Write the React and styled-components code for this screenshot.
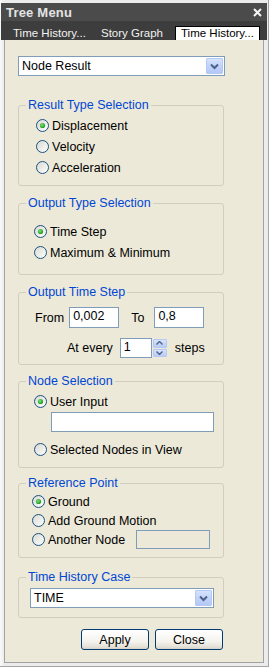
import React from 'react';
import styled, { createGlobalStyle } from 'styled-components';

const Global = createGlobalStyle`
  html, body { margin: 0; padding: 0; background: #efefef; }
  body { font-family: "Liberation Sans", Arial, sans-serif; }
  * { box-sizing: border-box; }
`;

const Window = styled.div`
  width: 269px;
  height: 667px;
  background: linear-gradient(90deg, #fafafa, #ececec 4px);
  padding-top: 3px;
  display: flex;
  flex-direction: column;
  box-shadow: inset -1px -1px 0 #a4a4a4;
  overflow: hidden;
`;

const TitleBar = styled.div`
  height: 18px;
  margin: 0 2px 0 1px;
  background: #4b4b4b;
  display: flex;
  align-items: center;
  justify-content: space-between;
  padding: 0 5px 0 5px;
  color: #e4e4e4;
  font: bold 13px "Liberation Sans", Arial, sans-serif;
  letter-spacing: 0.2px;
`;

const TabRow = styled.div`
  height: 19px;
  margin: 0 2px 0 1px;
  background: #3d3d3d;
  display: flex;
  align-items: flex-end;
  padding-left: 7px;
`;

const Tab = styled.div`
  width: ${p => p.$w}px;
  margin-right: ${p => p.$mr}px;
  height: 14px;
  padding-left: ${p => (p.$active ? 5 : 4)}px;
  font: 11.5px/13px "Liberation Sans", Arial, sans-serif;
  white-space: nowrap;
  overflow: hidden;
  color: ${p => (p.$active ? '#000' : '#f2f2f2')};
  background: ${p => (p.$active ? '#ffffff' : 'transparent')};
  border: 1px solid ${p => (p.$active ? '#000' : 'transparent')};
  border-bottom: none;
`;

const Body = styled.div`
  flex: 1;
  margin: 0 5px 4px 4px;
  background: #ece9d8;
  border: 1px solid #a2a2a2;
  border-top: none;
  display: flex;
  flex-direction: column;
  align-items: flex-start;
  padding: 16px 0 0 13px;
  font: 12.5px "Liberation Sans", Arial, sans-serif;
  color: #000;
`;

const Combo = styled.div`
  width: ${p => p.$w}px;
  height: 20px;
  margin-left: ${p => p.$ml || 0}px;
  background: #fff;
  border: 1px solid #7f9db9;
  display: flex;
  align-items: center;
  justify-content: space-between;
  padding: 0 1px 0 3px;
  font-size: 12.5px;
`;

const DropBtn = styled.div`
  width: 17px;
  height: 16px;
  border: 1px solid #b6c9f5;
  border-radius: 1px;
  background: linear-gradient(180deg, #d7e3fc 0%, #c1d3fb 50%, #b4c8f6 100%);
  display: flex;
  align-items: center;
  justify-content: center;
`;

const Group = styled.fieldset`
  width: 206px;
  margin: ${p => p.$mt}px 0 0 0;
  padding: ${p => p.$pt}px 0 ${p => p.$pb}px 0;
  border: 1px solid #d0cebf;
  border-radius: 3px;
  min-width: 0;
`;

const Legend = styled.legend`
  margin-left: 7px;
  padding: 0 2px;
  color: #0046d5;
  font: 12.5px/14px "Liberation Sans", Arial, sans-serif;
`;

const RadioRow = styled.div`
  display: flex;
  align-items: center;
  height: ${p => p.$h}px;
  padding-left: ${p => p.$indent}px;
  gap: 3px;
  white-space: nowrap;
`;

const Row = styled.div`
  display: flex;
  align-items: center;
  height: ${p => p.$h}px;
  margin-top: ${p => p.$mt || 0}px;
  padding-left: ${p => p.$pl}px;
`;

const Label = styled.span`
  margin-left: ${p => p.$ml || 0}px;
  margin-right: ${p => p.$mr || 0}px;
`;

const TextBox = styled.div`
  width: ${p => p.$w}px;
  height: ${p => p.$h}px;
  margin-left: ${p => p.$ml || 0}px;
  border: 1px solid #7f9db9;
  background: ${p => (p.$disabled ? '#ece9d8' : '#fff')};
  padding: 1px 3px 0;
  font-size: 12.5px;
  line-height: 15px;
  flex: none;
`;

const Spin = styled.div`
  display: flex;
  height: 20px;
  margin-right: 8px;
`;

const SpinButtons = styled.div`
  width: 15px;
  display: flex;
  flex-direction: column;
  gap: 1px;
  padding: 1px 0 1px 1px;
`;

const SpinBtn = styled.div`
  flex: 1;
  border: 1px solid #b6c9f5;
  border-radius: 1px;
  background: linear-gradient(180deg, #d7e3fc, #b9ccf7);
  display: flex;
  align-items: center;
  justify-content: center;
`;

const InputLine = styled.div`
  margin-left: 32px;
  margin-bottom: 7px;
`;

const ButtonRow = styled.div`
  width: 206px;
  display: flex;
  justify-content: flex-end;
  gap: 6px;
  margin-top: 11px;
  padding-right: 1px;
`;

const Button = styled.div`
  width: 68px;
  height: 21px;
  border: 1px solid #003c74;
  border-radius: 3px;
  background: linear-gradient(180deg, #ffffff 0%, #f4f3ee 60%, #e3e0d6 90%, #d6d0c5 100%);
  display: flex;
  align-items: center;
  justify-content: center;
  font-size: 12.5px;
`;

const Radio = ({ checked }) => (
  <svg width="13" height="13" viewBox="0 0 13 13" style={{ flex: 'none' }}>
    <defs>
      <linearGradient id="rb" x1="0" y1="0" x2="1" y2="1">
        <stop offset="0" stopColor="#d8d8d0" />
        <stop offset="1" stopColor="#ffffff" />
      </linearGradient>
      <radialGradient id="rd" cx="0.4" cy="0.4" r="0.6">
        <stop offset="0" stopColor="#7ee07e" />
        <stop offset="1" stopColor="#1e9a1e" />
      </radialGradient>
    </defs>
    <circle cx="6.5" cy="6.5" r="6" fill="url(#rb)" stroke="#1c5180" strokeWidth="1" />
    {checked && <circle cx="6.5" cy="6.5" r="2.6" fill="url(#rd)" />}
  </svg>
);

const Chevron = () => (
  <svg width="9" height="7" viewBox="0 0 9 7">
    <path d="M1 1.5 L4.5 5 L8 1.5" fill="none" stroke="#4d6185" strokeWidth="2" />
  </svg>
);

const SmallArrow = ({ up }) => (
  <svg width="7" height="4" viewBox="0 0 7 4">
    <path d={up ? 'M0.5 3.5 L3.5 0.5 L6.5 3.5' : 'M0.5 0.5 L3.5 3.5 L6.5 0.5'} fill="none" stroke="#4d6185" strokeWidth="1.4" />
  </svg>
);

const CloseX = () => (
  <svg width="9" height="9" viewBox="0 0 9 9">
    <path d="M1 1 L8 8 M8 1 L1 8" stroke="#f4f4f4" strokeWidth="2" />
  </svg>
);

const RadioItem = ({ checked, label, h, indent, children }) => (
  <RadioRow $h={h} $indent={indent}>
    <Radio checked={checked} />
    <span>{label}</span>
    {children}
  </RadioRow>
);

export default function App() {
  return (
    <>
      <Global />
      <Window>
        <TitleBar>
          <span>Tree Menu</span>
          <CloseX />
        </TitleBar>
        <TabRow>
          <Tab $w={84} $mr={4}>Time History...</Tab>
          <Tab $w={79} $mr={0}>Story Graph</Tab>
          <Tab $w={85} $mr={0} $active>Time History...</Tab>
        </TabRow>
        <Body>
          <Combo $w={207}>
            <span>Node Result</span>
            <DropBtn><Chevron /></DropBtn>
          </Combo>

          <Group $mt={22} $pt={3} $pb={7}>
            <Legend>Result Type Selection</Legend>
            <RadioItem checked label="Displacement" h={21} indent={17} />
            <RadioItem label="Velocity" h={21} indent={17} />
            <RadioItem label="Acceleration" h={21} indent={17} />
          </Group>

          <Group $mt={10} $pt={11} $pb={11}>
            <Legend>Output Type Selection</Legend>
            <RadioItem checked label="Time Step" h={21} indent={15} />
            <RadioItem label="Maximum & Minimum" h={21} indent={15} />
          </Group>

          <Group $mt={10} $pt={8} $pb={6}>
            <Legend>Output Time Step</Legend>
            <Row $h={21} $pl={16}>
              <Label $mr={5}>From</Label>
              <TextBox $w={50} $h={21}>0,002</TextBox>
              <Label $ml={12} $mr={10}>To</Label>
              <TextBox $w={50} $h={21}>0,8</TextBox>
            </Row>
            <Row $h={20} $pl={48} $mt={10}>
              <Label $mr={7}>At every</Label>
              <Spin>
                <TextBox $w={32} $h={20}>1</TextBox>
                <SpinButtons>
                  <SpinBtn><SmallArrow up /></SpinBtn>
                  <SpinBtn><SmallArrow /></SpinBtn>
                </SpinButtons>
              </Spin>
              <Label>steps</Label>
            </Row>
          </Group>

          <Group $mt={9} $pt={3} $pb={7}>
            <Legend>Node Selection</Legend>
            <RadioItem checked label="User Input" h={21} indent={15} />
            <InputLine>
              <TextBox $w={163} $h={20} />
            </InputLine>
            <RadioItem label="Selected Nodes in View" h={21} indent={15} />
          </Group>

          <Group $mt={8} $pt={2} $pb={8}>
            <Legend>Reference Point</Legend>
            <RadioItem checked label="Ground" h={19} indent={13} />
            <RadioItem label="Add Ground Motion" h={19} indent={13} />
            <RadioItem label="Another Node" h={19} indent={13}>
              <TextBox $w={74} $h={19} $ml={8} $disabled />
            </RadioItem>
          </Group>

          <Group $mt={12} $pt={4} $pb={9}>
            <Legend>Time History Case</Legend>
            <Combo $w={184} $ml={11}>
              <span>TIME</span>
              <DropBtn><Chevron /></DropBtn>
            </Combo>
          </Group>

          <ButtonRow>
            <Button>Apply</Button>
            <Button>Close</Button>
          </ButtonRow>
        </Body>
      </Window>
    </>
  );
}
